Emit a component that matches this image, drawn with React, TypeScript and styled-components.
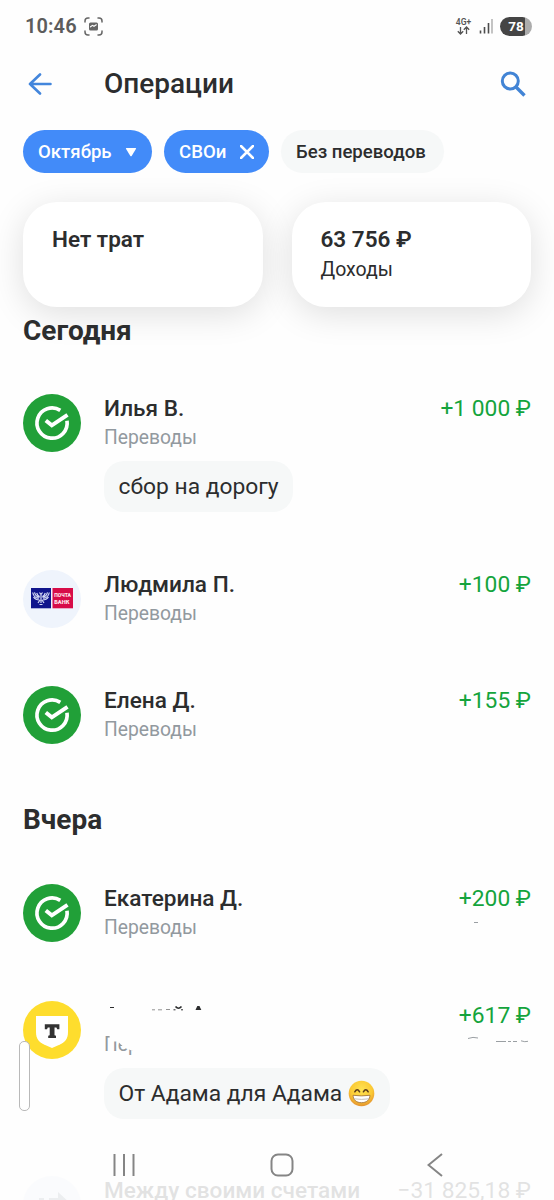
import React from "react";
import styled, { createGlobalStyle } from "styled-components";

const GlobalStyle = createGlobalStyle`
  * { box-sizing: border-box; }
  body { margin: 0; background: #fefefe; font-family: Roboto, "Liberation Sans", sans-serif; color: #2c2d2e; }
`;

const Screen = styled.div`
  position: relative;
  width: 554px;
  height: 1200px;
  overflow: hidden;
  background: #fefefe;
`;

const StatusBar = styled.div`
  display: flex;
  justify-content: space-between;
  align-items: center;
  height: 52px;
  padding: 0 22px 0 25px;
`;

const StatusGroup = styled.div<{ $gap: number }>`
  display: flex;
  align-items: center;
  gap: ${(p) => p.$gap}px;
`;

const Clock = styled.span`
  font-size: 20px;
  font-weight: 600;
  letter-spacing: 0.1px;
  color: #5c5c5c;
`;

const Network = styled.div`
  display: flex;
  flex-direction: column;
  align-items: center;
  width: 17px;
  font-size: 8.5px;
  line-height: 8px;
  font-weight: 600;
  color: #555;
`;

const Battery = styled.div`
  width: 32px;
  height: 19px;
  border-radius: 10px;
  background: linear-gradient(90deg, #454545 78%, #acacac 78%);
  color: #fff;
  font: 700 13.5px/19px Roboto, sans-serif;
  text-align: center;
`;

const Header = styled.header`
  display: flex;
  align-items: center;
  height: 64px;
  padding: 0 28px;
`;

const Title = styled.h1`
  flex: 1;
  margin: 0 0 0 52px;
  font-size: 28px;
  font-weight: 500;
  line-height: 36px;
`;

const Chips = styled.div`
  display: flex;
  gap: 12px;
  padding: 14px 23px 0;
`;

const Chip = styled.button<{ $active?: boolean; $width: number }>`
  display: flex;
  align-items: center;
  justify-content: space-between;
  width: ${(p) => p.$width}px;
  height: 43px;
  padding: 0 15px;
  border: 0;
  border-radius: 22px;
  background: ${(p) => (p.$active ? "#428bf9" : "#f6f8f8")};
  color: ${(p) => (p.$active ? "#fff" : "#2c2d2e")};
  font: 500 18.6px/24px Roboto, sans-serif;
  white-space: nowrap;
`;

const Cards = styled.div`
  display: grid;
  grid-template-columns: 1fr 1fr;
  gap: 29px;
  padding: 29px 23px 0;
`;

const Card = styled.section`
  height: 105px;
  padding: 23px 29px;
  border-radius: 34px;
  background: #fff;
  box-shadow: 0 7px 34px rgba(0, 0, 0, 0.125);
`;

const CardValue = styled.div`
  font-size: 22.5px;
  line-height: 28px;
  font-weight: 600;
`;

const CardLabel = styled.div`
  margin-top: 3px;
  font-size: 19.5px;
  line-height: 28px;
`;

const DayTitle = styled.h2<{ $top: number; $bottom: number }>`
  position: relative;
  margin: ${(p) => p.$top}px 23px ${(p) => p.$bottom}px;
  font-size: 28px;
  line-height: 36px;
  font-weight: 700;
`;

const Operation = styled.article<{ $faded?: boolean; $last?: boolean }>`
  display: flex;
  align-items: flex-start;
  margin-bottom: ${(p) => (p.$last ? 0 : 57.5)}px;
  padding: 0 23px;
  opacity: ${(p) => (p.$faded ? 0.13 : 1)};
`;

const Avatar = styled.div<{ $color: string }>`
  flex: none;
  width: 58px;
  height: 58px;
  margin-right: 23px;
  border-radius: 50%;
  background: ${(p) => p.$color};
  svg { display: block; }
`;

const Details = styled.div`
  flex: 1;
  min-width: 0;
  min-height: 58px;
`;

const Line = styled.div`
  display: flex;
  justify-content: space-between;
  height: 29px;
  white-space: nowrap;
`;

const Name = styled.span`
  font-size: 22.6px;
  line-height: 29px;
  font-weight: 500;
`;

const Amount = styled.span<{ $income?: boolean }>`
  font-size: 22.8px;
  line-height: 29px;
  color: ${(p) => (p.$income ? "#14a43c" : "#2c2d2e")};
`;

const Category = styled.div<{ $partial?: boolean }>`
  height: 30px;
  font-size: 19.3px;
  line-height: 30px;
  color: #92999f;
  clip-path: ${(p) => (p.$partial ? "polygon(0 0, 5px 0, 6px 12px, 14px 12px, 20px 18px, 30px 22px, 30px 30px, 0 30px)" : "none")};
`;

const Note = styled.div`
  display: inline-flex;
  align-items: center;
  gap: 6px;
  height: 51px;
  margin-top: 8px;
  padding: 0 14.5px;
  border-radius: 20px;
  background: #f6f8f8;
  font-size: 22.8px;
  white-space: nowrap;
`;

const NavBar = styled.nav`
  position: absolute;
  left: 0;
  right: 0;
  bottom: 20px;
  display: flex;
  height: 30px;
  justify-content: space-between;
  align-items: center;
  padding: 0 111px 0 112px;
`;

const EdgeHandle = styled.div`
  position: absolute;
  left: 18.5px;
  top: 1041px;
  width: 11.5px;
  height: 70px;
  border: 1px solid #b9b9b9;
  border-radius: 5px;
  background: rgba(255, 255, 255, 0.93);
`;

const SberLogo = () => (
  <svg width="58" height="58" viewBox="0 0 58 58" fill="none" stroke="#fff" strokeWidth="3.7">
    <path d="M37.3 16.4A15.1 15.1 0 1 0 44 26.8" />
    <path d="M22.8 26.5L28.8 31.3L44.5 20.8" strokeWidth="4" />
  </svg>
);

const PochtaLogo = () => (
  <svg width="58" height="58" viewBox="0 0 58 58">
    <rect x="8" y="18" width="20" height="20.3" fill="#10158c" />
    <rect x="29.5" y="18" width="20.5" height="20.3" fill="#d70c48" />
    <g fill="none" stroke="#d5daf5" strokeWidth="1.2">
      <path d="M9.7 22.5q1 5 6 6M11.5 22.3q1 4 5 5M13.7 23q1 3 3 3.5M26.3 22.5q-1 5-6 6M24.5 22.3q-1 4-5 5M22.3 23q-1 3-3 3.5M10.5 27q2 3 6 3M25.5 27q-2 3-6 3" />
      <path d="M16.5 22.5l1.5 2 1.5-2M18 24v9M15 33l2-3M21 33l-2-3M16.5 34.5h3" />
    </g>
    <g fill="#ffe3ec" fontFamily="Roboto, sans-serif" fontWeight="900" fontSize="6.2">
      <text x="31.3" y="27.3" textLength="16.7" lengthAdjust="spacingAndGlyphs">ПОЧТА</text>
      <text x="31.3" y="34.3" textLength="15" lengthAdjust="spacingAndGlyphs">БАНК</text>
    </g>
  </svg>
);

const TLogo = () => (
  <svg width="58" height="58" viewBox="0 0 58 58">
    <path d="M13 15h32v16c0 7-3 10-8 12.5L29 47l-8-3.500C16 41 13 38 13 31z" fill="#fff" />
    <path d="M21.800 23.200h14.600v5h-2.200l-.8-1.600h-1.900v7.700l1.500.4v2.200h-7.800v-2.200l1.500-.4v-7.700h-1.900l-.8 1.600h-2.200z" fill="#333" />
  </svg>
);

const TransferLogo = () => (
  <svg width="58" height="58" viewBox="0 0 58 58" fill="#7b8a9a">
    <path d="M16 22h5v3h5v-3h9v-6l12 11-12 11v-6H16z" />
  </svg>
);

const Grin = () => (
  <svg width="27" height="27" viewBox="0 0 27 27">
    <defs>
      <radialGradient id="face" cx="50%" cy="35%" r="65%">
        <stop offset="0" stopColor="#ffe352" />
        <stop offset="0.65" stopColor="#fbc934" />
        <stop offset="1" stopColor="#e3912e" />
      </radialGradient>
    </defs>
    <circle cx="13.500" cy="13.500" r="12.800" fill="url(#face)" />
    <path d="M6.800 11.800q2.400-4.200 4.800 0M15.400 11.800q2.400-4.200 4.800 0" fill="none" stroke="#5b3b1a" strokeWidth="1.500" strokeLinecap="round" />
    <path d="M5 15.300q8.500 1.200 17 0c-.2 4.600-3.500 7.400-8.500 7.400S5.200 19.900 5 15.300z" fill="#fff" stroke="#9a6a35" strokeWidth="0.800" />
    <path d="M5.800 18.800q7.700 1.200 15.400 0" fill="none" stroke="#b8b0a8" strokeWidth="0.800" />
  </svg>
);

const NameFragments = () => (
  <svg width="110" height="29" viewBox="0 0 110 29" fill="none" stroke="#2c2d2e">
    <path d="M6 6.500h4" strokeWidth="1" />
    <path d="M48 8.800h3M54 8.800h4M62 8.500h4" stroke="#777" strokeWidth="0.800" />
    <path d="M71.500 5.500q3 3.500 6 0" strokeWidth="1.700" />
    <path d="M69.500 8.800h2M77 8.800h2" strokeWidth="1" />
    <path d="M91.500 9l1.800-4h2.200l1.800 4z" fill="#2c2d2e" stroke="none" />
  </svg>
);

const Side = styled.div`
  display: flex;
  flex-direction: column;
  align-items: flex-end;
  height: 29px;
`;

const BonusFragments = ({ full }: { full?: boolean }) => (
  <svg width="66" height="14" viewBox="0 0 66 14" style={{ flex: "none" }} fill="none" stroke="#8f9499" strokeWidth="0.900">
    {full ? (
      <path d="M3 8.500q5-2 10-.5M31 11.500h10M43 11.500h3M48 11.500h4M56 10.800q4 1.500 7 .5" />
    ) : (
      <path d="M9 9.500h4" />
    )}
  </svg>
);

type Item = {
  logo: React.ReactNode;
  color: string;
  name: React.ReactNode;
  category?: string;
  amount: string;
  note?: React.ReactNode;
  partial?: boolean;
  faded?: boolean;
  last?: boolean;
  fragments?: React.ReactNode;
};

const OperationRow = (p: Item) => (
  <Operation $faded={p.faded} $last={p.last}>
    <Avatar $color={p.color}>{p.logo}</Avatar>
    <Details>
      <Line>
        <Name>{p.name}</Name>
        <Side>
          <Amount $income={!p.faded}>{p.amount}</Amount>
          {p.fragments}
        </Side>
      </Line>
      <Category $partial={p.partial}>{p.category}</Category>
      {p.note && <Note>{p.note}</Note>}
    </Details>
  </Operation>
);

export default function App() {
  return (
    <Screen>
      <GlobalStyle />
      <StatusBar>
        <StatusGroup $gap={7}>
          <Clock>10:46</Clock>
          <svg width="19" height="19" viewBox="0 0 19 19" fill="none" stroke="#666" strokeWidth="1.500" strokeLinecap="round">
            <path d="M1 5V4q0-3 3-3h1M14 1h1q3 0 3 3v1M18 14v1q0 3-3 3h-1M5 18H4q-3 0-3-3v-1" />
            <rect x="5" y="5.500" width="9" height="8" rx="1.500" fill="#666" stroke="none" />
            <path d="M6.500 9.800l2-1.500 1.500 1 2.300-1.500" stroke="#fff" strokeWidth="1.100" />
          </svg>
        </StatusGroup>
        <StatusGroup $gap={7}>
          <Network>
            4G+
            <svg width="13" height="9" viewBox="0 0 13 9" fill="none" stroke="#555" strokeWidth="1.300">
              <path d="M3.500 1v7M.8 5.200L3.500 8l2.700-2.800M9.500 8V1M6.800 3.800L9.500 1l2.700 2.800" />
            </svg>
          </Network>
          <svg width="14" height="16" viewBox="0 0 14 16" strokeWidth="1.600">
            <path d="M1.500 15.500v-3M5.500 15.500V9M9.500 15.500V5" stroke="#4c4c4c" />
            <path d="M13 15.500V1" stroke="#b5b5b5" />
          </svg>
          <Battery>78</Battery>
        </StatusGroup>
      </StatusBar>
      <Header>
        <svg width="24" height="22" viewBox="0 0 24 22" fill="none" stroke="#4386dc" strokeWidth="2.600" strokeLinecap="round" strokeLinejoin="round">
          <path d="M22.500 11H2M12 1.500L2 11l10 9.500" />
        </svg>
        <Title>Операции</Title>
        <svg width="26" height="26" viewBox="0 0 26 26" fill="none" stroke="#4284d5">
          <circle cx="10.300" cy="10" r="8" strokeWidth="3" />
          <path d="M16 16l8.500 8.500" strokeWidth="3.400" />
        </svg>
      </Header>
      <Chips>
        <Chip $active $width={129}>
          Октябрь
          <svg width="12" height="10" viewBox="0 0 12 10" fill="#fff">
            <path d="M1.500 1h9q1 0 .4 1L6.800 8.700q-.8 1-1.600 0L1.100 2Q.5 1 1.500 1z" />
          </svg>
        </Chip>
        <Chip $active $width={105}>
          СВОи
          <svg width="14" height="14" viewBox="0 0 14 14" stroke="#fff" strokeWidth="2.500" strokeLinecap="round">
            <path d="M1 1l12 12M13 1L1 13" />
          </svg>
        </Chip>
        <Chip $width={163}>Без переводов</Chip>
      </Chips>
      <Cards>
        <Card>
          <CardValue>Нет трат</CardValue>
        </Card>
        <Card>
          <CardValue>63 756 ₽</CardValue>
          <CardLabel>Доходы</CardLabel>
        </Card>
      </Cards>
      <DayTitle $top={6} $bottom={45}>Сегодня</DayTitle>
      <OperationRow logo={<SberLogo />} color="#21a038" name="Илья В." category="Переводы" amount="+1 000 ₽" note="сбор на дорогу" />
      <OperationRow logo={<PochtaLogo />} color="#eff4fc" name="Людмила П." category="Переводы" amount="+100 ₽" />
      <OperationRow logo={<SberLogo />} color="#21a038" name="Елена Д." category="Переводы" amount="+155 ₽" last />
      <DayTitle $top={57} $bottom={46}>Вчера</DayTitle>
      <OperationRow logo={<SberLogo />} color="#21a038" name="Екатерина Д." category="Переводы" amount="+200 ₽" fragments={<BonusFragments />} />
      <OperationRow
        logo={<TLogo />}
        color="#fedd2d"
        name={<NameFragments />}
        category="Пер"
        partial
        amount="+617 ₽"
        fragments={<BonusFragments full />}
        note={<>От Адама для Адама <Grin /></>}
      />
      <OperationRow logo={<TransferLogo />} color="#e4edfa" name="Между своими счетами" amount="−31 825,18 ₽" faded last />
      <EdgeHandle />
      <NavBar>
        <svg width="24" height="24" viewBox="0 0 24 24" stroke="#858585" strokeWidth="2">
          <path d="M2.500 1v22M12 1v22M21.500 1v22" />
        </svg>
        <svg width="24" height="24" viewBox="0 0 24 24" fill="none" stroke="#858585" strokeWidth="2">
          <rect x="1.500" y="1.500" width="21" height="21" rx="6.500" />
        </svg>
        <svg width="16" height="24" viewBox="0 0 16 24" fill="none" stroke="#858585" strokeWidth="2">
          <path d="M15 1L1.500 12L15 23" />
        </svg>
      </NavBar>
    </Screen>
  );
}
